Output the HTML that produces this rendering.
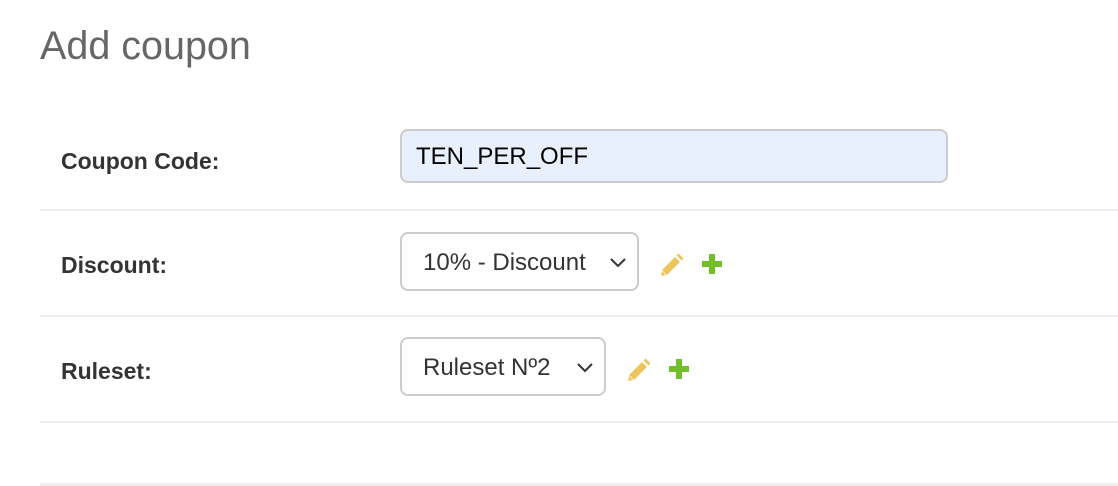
<!DOCTYPE html>
<html><head><style>
body{margin:0;width:1118px;height:486px;background:#fff;font-family:"Liberation Sans",sans-serif;position:relative;overflow:hidden}
h1{position:absolute;left:40px;top:24px;margin:0;font-weight:300;font-size:39.5px;color:#666}
.lbl{position:absolute;left:61px;font-weight:bold;font-size:23px;color:#333}
.hr{position:absolute;left:40px;right:0;height:2px;background:#eee}
.box{position:absolute;border:2px solid #ccc;border-radius:8px;box-sizing:border-box;font-size:24px;color:#333;padding-left:21px;line-height:58px}
.chev{position:absolute;right:10px;top:22px}
</style></head><body>
<h1>Add coupon</h1>
<div class="lbl" style="top:148px">Coupon Code:</div>
<div class="box" style="left:400px;top:129px;width:548px;height:54px;background:#e8f0fe;line-height:52px;padding-left:14px;color:#000">TEN_PER_OFF</div>
<div class="hr" style="top:209px"></div>
<div class="lbl" style="top:252px">Discount:</div>
<div class="box" style="left:400px;top:232px;width:239px;height:59px">10% - Discount
<svg class="chev" width="18" height="12" viewBox="0 0 18 12"><path d="M2 3l7 7 7-7" fill="none" stroke="#333" stroke-width="2"/></svg></div>
<svg style="position:absolute;left:659px;top:252px" width="26" height="26" viewBox="0 0 26 26"><g fill="#edc55c"><path d="M3 18L16 5l5 5L8 23z"/><path d="M17.5 3.5l2-2 5 5-2 2z"/><path d="M2 24l1-5 4 4z"/></g></svg>
<svg style="position:absolute;left:701px;top:253px" width="22" height="22" viewBox="0 0 22 22"><path d="M8 1h6v7h7v6h-7v7H8v-7H1V8h7z" fill="#70bf2b"/></svg>
<div class="hr" style="top:315px"></div>
<div class="lbl" style="top:358px">Ruleset:</div>
<div class="box" style="left:400px;top:337px;width:206px;height:59px">Ruleset Nº2
<svg class="chev" width="18" height="12" viewBox="0 0 18 12"><path d="M2 3l7 7 7-7" fill="none" stroke="#333" stroke-width="2"/></svg></div>
<svg style="position:absolute;left:626px;top:357px" width="26" height="26" viewBox="0 0 26 26"><g fill="#edc55c"><path d="M3 18L16 5l5 5L8 23z"/><path d="M17.5 3.5l2-2 5 5-2 2z"/><path d="M2 24l1-5 4 4z"/></g></svg>
<svg style="position:absolute;left:668px;top:358px" width="22" height="22" viewBox="0 0 22 22"><path d="M8 1h6v7h7v6h-7v7H8v-7H1V8h7z" fill="#70bf2b"/></svg>
<div class="hr" style="top:421px"></div>
<div class="hr" style="top:483px;height:3px"></div>
</body></html>
